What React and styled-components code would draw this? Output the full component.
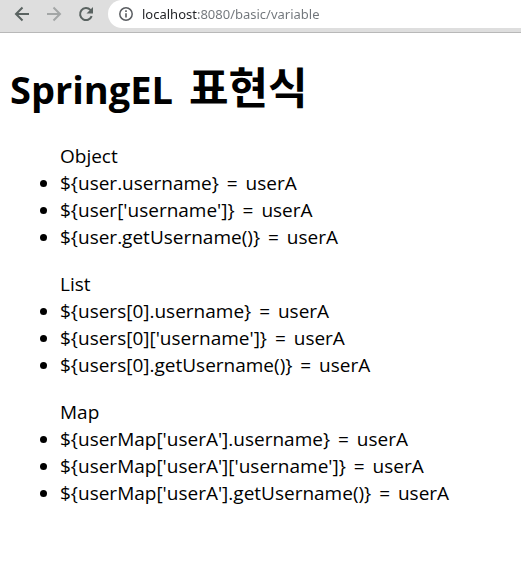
import React, { useState } from "react";
import styled, { createGlobalStyle } from "styled-components";

const GlobalStyle = createGlobalStyle`
  body {
    margin: 0;
    background: #fff;
    color: #000;
    font-family: "Open Sans", "Noto Sans CJK KR", sans-serif;
  }
`;

const Toolbar = styled.header`
  display: flex;
  align-items: center;
  height: 28px;
  padding: 0 0 4px 6px;
  background: #dedede;
  border-bottom: 1px solid #b8b8b8;
`;

const ToolButton = styled.button`
  display: flex;
  align-items: center;
  justify-content: center;
  width: 32px;
  height: 28px;
  padding: 0;
  border: 0;
  background: none;
  color: #5a6361;

  &:disabled {
    color: #a3a6a6;
  }
`;

const AddressBar = styled.div`
  display: flex;
  flex: 1;
  align-items: center;
  gap: 8px;
  height: 28px;
  margin-left: 6px;
  padding-left: 10px;
  border-radius: 14px 0 0 14px;
  background: #fff;
`;

const SiteInfo = styled.button`
  display: flex;
  padding: 0;
  border: 0;
  background: none;
  color: #5a5d61;
`;

const UrlInput = styled.input`
  flex: 1;
  min-width: 0;
  padding: 0;
  border: 0;
  outline: 0;
  font: 13px/20px "Noto Sans", "Noto Sans CJK KR", sans-serif;
  color: transparent;
  caret-color: #202124;
  background: linear-gradient(to right, #202124 56px, #70757a 56px);
  background-clip: text;
  -webkit-background-clip: text;
`;

const Page = styled.main`
  padding: 0 10px;
`;

const Title = styled.h1`
  margin: 28px 0 26px;
  font-size: 38px;
  line-height: 56px;
  font-weight: 700;
`;

const Hangul = styled.span`
  margin-left: 6px;
  font-size: 43px;
  line-height: 1;
`;

const ExpressionList = styled.ul`
  margin: 20px 0;
  padding-left: 50px;
  font-size: 19px;
  line-height: 27px;
`;

const GroupName = styled.li`
  list-style: none;
`;

const Expression = styled.li`
  list-style: disc;
`;

const EqualSign = styled.span`
  margin: 0 3px;
`;

const groups = [
  {
    name: "Object",
    rows: ["${user.username}", "${user['username']}", "${user.getUsername()}"],
  },
  {
    name: "List",
    rows: ["${users[0].username}", "${users[0]['username']}", "${users[0].getUsername()}"],
  },
  {
    name: "Map",
    rows: [
      "${userMap['userA'].username}",
      "${userMap['userA']['username']}",
      "${userMap['userA'].getUsername()}",
    ],
  },
];

function Icon({ children }) {
  return (
    <svg width="16" height="16" viewBox="0 0 16 16" fill="none" stroke="currentColor" strokeWidth="2" aria-hidden="true">
      {children}
    </svg>
  );
}

export default function App() {
  const [url, setUrl] = useState("localhost:8080/basic/variable");
  return (
    <>
      <GlobalStyle />
      <Toolbar>
        <ToolButton aria-label="Back">
          <Icon><path d="M15 8H2.5M8.5 1.5 2 8l6.500 6.500" /></Icon>
        </ToolButton>
        <ToolButton aria-label="Forward" disabled>
          <Icon><path d="M1 8h12.500M7.500 1.500 14 8l-6.500 6.500" /></Icon>
        </ToolButton>
        <ToolButton aria-label="Reload">
          <Icon>
            <path d="M13.700 10.200A6 6 0 1 1 12.400 3.900L13.500 5" />
            <path d="M15 1v6.500H8.500z" fill="currentColor" stroke="none" />
          </Icon>
        </ToolButton>
        <AddressBar>
          <SiteInfo aria-label="Site information">
            <Icon>
              <circle cx="8" cy="8" r="6.200" strokeWidth="1.500" />
              <path d="M8 7.200v4.300M8 4.300v1.600" strokeWidth="1.600" />
            </Icon>
          </SiteInfo>
          <UrlInput aria-label="Address" value={url} onChange={(e) => setUrl(e.target.value)} />
        </AddressBar>
      </Toolbar>
      <Page>
        <Title>SpringEL <Hangul lang="ko">표현식</Hangul></Title>
        {groups.map((group) => (
          <ExpressionList key={group.name}>
            <GroupName>{group.name}</GroupName>
            {group.rows.map((row) => (
              <Expression key={row}>
                {row} <EqualSign>=</EqualSign> userA
              </Expression>
            ))}
          </ExpressionList>
        ))}
      </Page>
    </>
  );
}
